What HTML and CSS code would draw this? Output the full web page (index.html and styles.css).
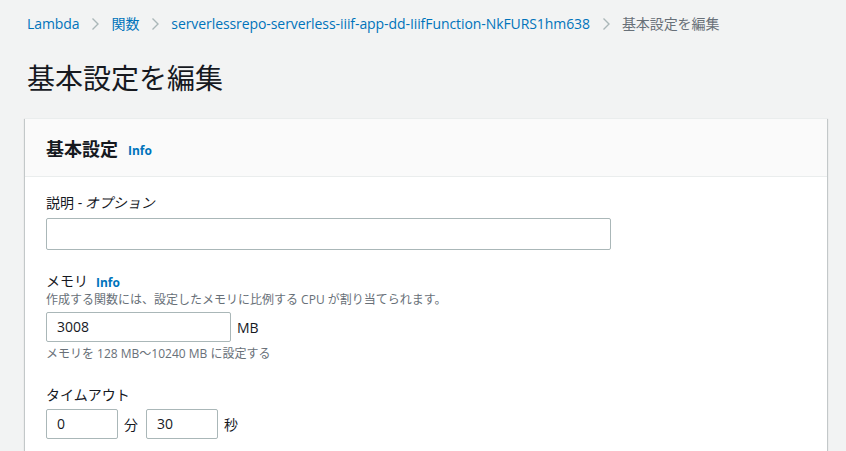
FILE: index.html
```html
<!DOCTYPE html>
<html lang="ja">
<head>
<meta charset="utf-8">
<link rel="stylesheet" href="styles.css">
</head>
<body>
<div class="page">
  <nav class="crumbs">
    <a class="crumb-link">Lambda</a>
    <span class="sep"><svg width="9" height="14" viewBox="0 0 9 14"><path d="M1.5 1.5 L7 7 L1.5 12.5" fill="none" stroke="#aab7b8" stroke-width="1.4"/></svg></span>
    <a class="crumb-link">関数</a>
    <span class="sep"><svg width="9" height="14" viewBox="0 0 9 14"><path d="M1.5 1.5 L7 7 L1.5 12.5" fill="none" stroke="#aab7b8" stroke-width="1.4"/></svg></span>
    <a class="crumb-link">serverlessrepo-serverless-iiif-app-dd-IiifFunction-NkFURS1hm638</a>
    <span class="sep"><svg width="9" height="14" viewBox="0 0 9 14"><path d="M1.5 1.5 L7 7 L1.5 12.5" fill="none" stroke="#aab7b8" stroke-width="1.4"/></svg></span>
    <span class="crumb-current">基本設定を編集</span>
  </nav>
  <h1 class="title">基本設定を編集</h1>
  <section class="card">
    <header class="card-head">
      <h2 class="card-title">基本設定</h2>
      <a class="info">Info</a>
    </header>
    <div class="card-body">
      <div class="field">
        <label class="label">説明 - <span class="opt">オプション</span></label>
        <div class="input input-wide"></div>
      </div>
      <div class="field field-mem">
        <div class="label-row"><span class="label">メモリ</span><a class="info small">Info</a></div>
        <div class="desc">作成する関数には、設定したメモリに比例する CPU が割り当てられます。</div>
        <div class="row">
          <div class="input input-mem">3008</div>
          <span class="unit">MB</span>
        </div>
        <div class="hint">メモリを 128 MB～10240 MB に設定する</div>
      </div>
      <div class="field field-timeout">
        <div class="label">タイムアウト</div>
        <div class="row">
          <div class="input input-small">0</div>
          <span class="unit">分</span>
          <div class="input input-small">30</div>
          <span class="unit">秒</span>
        </div>
      </div>
    </div>
  </section>
</div>
</body>
</html>
```
FILE: styles.css
```css
* { box-sizing: border-box; }
html, body { margin: 0; padding: 0; }
body {
  background: #f2f3f3;
  font-family: "Open Sans", "Noto Sans CJK JP", sans-serif;
  color: #16191f;
  width: 846px;
  height: 451px;
  overflow: hidden;
}
.page { padding: 12px 20px 0 25px; }
.crumbs {
  display: flex;
  align-items: center;
  font-size: 14px;
  line-height: 24px;
  padding-left: 2px;
  white-space: nowrap;
  letter-spacing: -0.08px;
}
.crumb-link { color: #0073bb; text-decoration: none; }
.crumb-current { color: #687078; }
.sep { display: inline-flex; align-items: center; margin: 0 11px 0 12px; }
.title {
  font-size: 28px;
  font-weight: 400;
  margin: 22px 0 0 2px;
  line-height: 40px;
}
.card {
  margin-top: 20px;
  background: #fff;
  width: 802px;
  height: 333px;
  box-shadow: 0 1px 1px 0 rgba(0,28,36,.3), 1px 1px 1px 0 rgba(0,28,36,.15), -1px 1px 1px 0 rgba(0,28,36,.15);
  border-top: 1px solid #eaeded;
}
.card-head {
  background: #fafafa;
  border-bottom: 1px solid #eaeded;
  height: 58px;
  display: flex;
  align-items: center;
  padding-left: 21px;
}
.card-title { font-size: 18px; font-weight: 700; margin: 0; }
.info {
  color: #0073bb;
  font-size: 12px;
  font-weight: 700;
  margin-left: 10px;
  margin-top: 5px;
}
.card-body { padding: 16px 21px 0; }
.label { font-size: 14px; line-height: 20px; display: block; }
.opt { display: inline-block; transform: skewX(-12deg); }
.input {
  border: 1px solid #aab7b8;
  border-radius: 2px;
  background: #fff;
  height: 30px;
  font-size: 14px;
  line-height: 28px;
  padding: 0 10px;
}
.input-wide { width: 565px; height: 32px; margin-top: 5px; }
.field-mem { margin-top: 21px; }
.label-row { display: flex; align-items: center; }
.info.small { margin-left: 8px; margin-top: 2px; }
.desc { font-size: 12px; color: #687078; line-height: 16px; margin-top: 1px; }
.row { display: flex; align-items: center; margin-top: 4px; }
.input-mem { width: 185px; }
.unit { font-size: 14px; margin: 0 8px 0 6px; }
.hint { font-size: 12px; color: #687078; line-height: 16px; margin-top: 4px; }
.field-timeout { margin-top: 23px; }
.input-small { width: 72px; }
.field-timeout .row { margin-top: 4px; }
```
